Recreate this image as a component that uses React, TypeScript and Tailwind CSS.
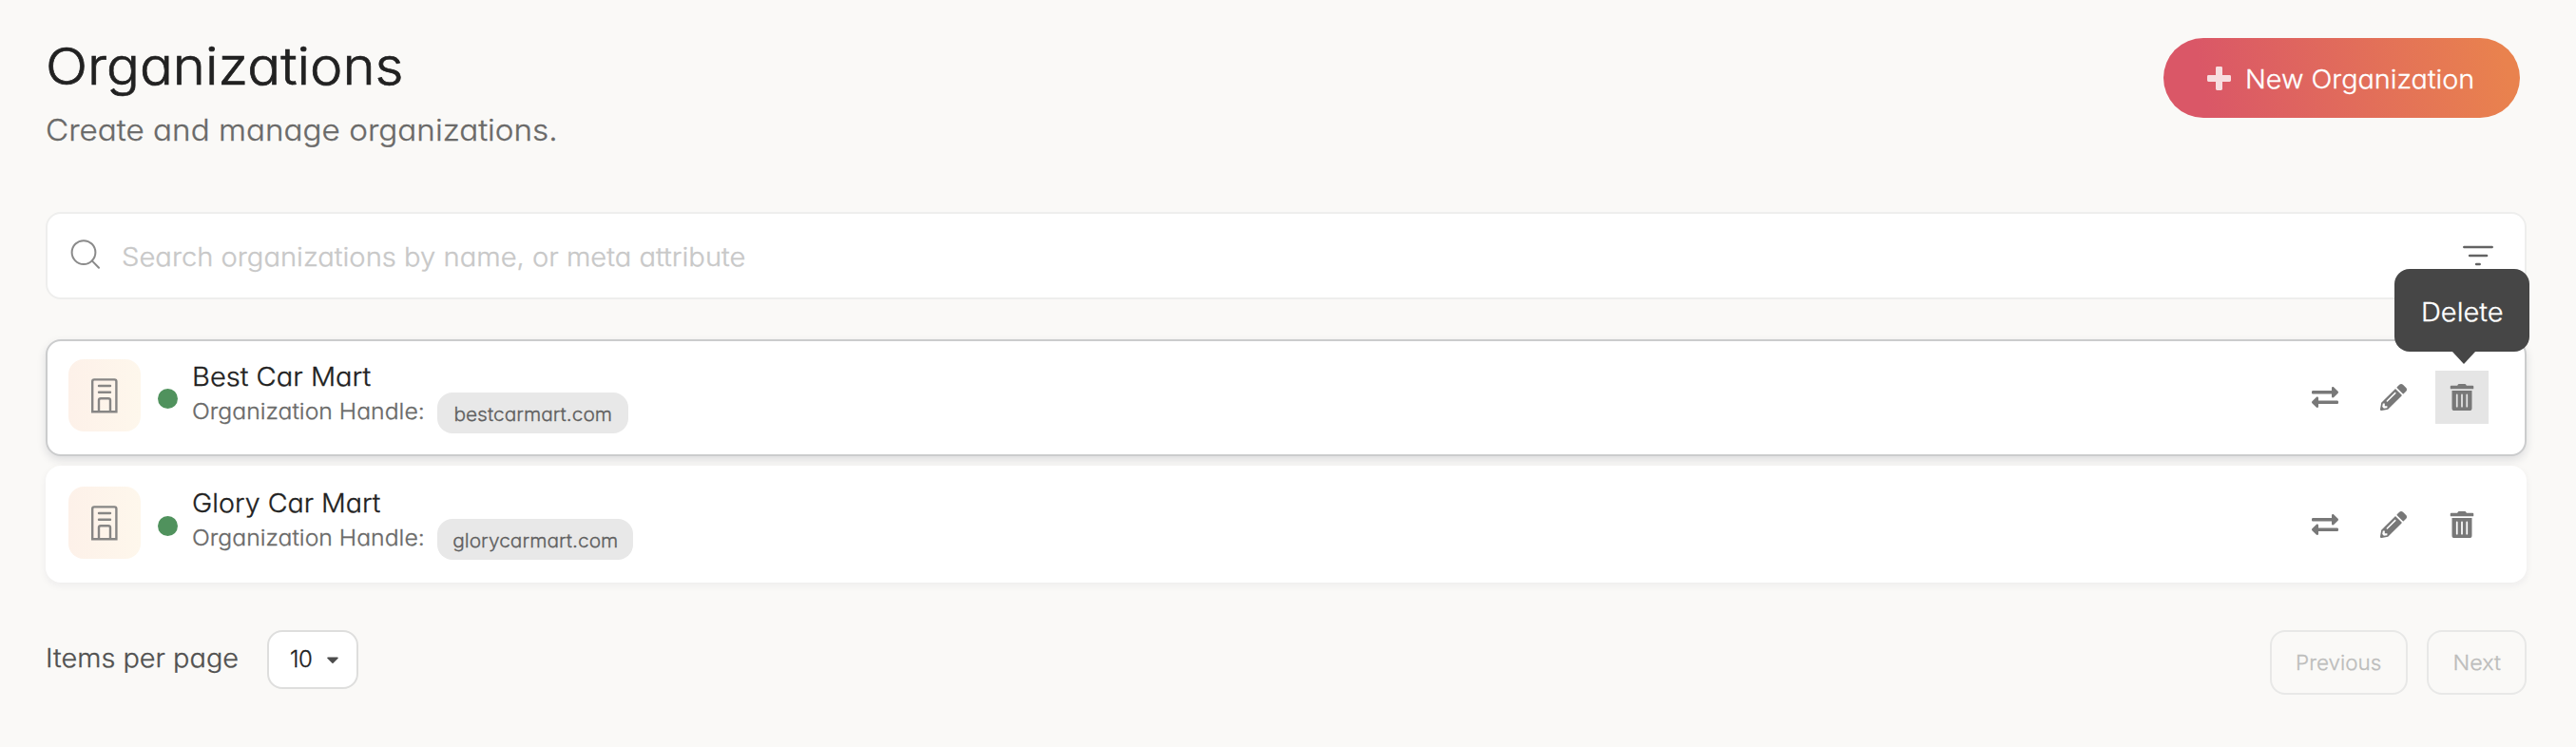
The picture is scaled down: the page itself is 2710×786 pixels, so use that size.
import { FaCaretDown, FaExchangeAlt, FaPencilAlt, FaTrashAlt } from 'react-icons/fa';

type Organization = { name: string; handle: string; nameClass: string; chipClass: string };

const organizations: Organization[] = [
  { name: 'Best Car Mart', handle: 'bestcarmart.com', nameClass: 'scale-x-[1.077]', chipClass: 'w-[201px]' },
  { name: 'Glory Car Mart', handle: 'glorycarmart.com', nameClass: 'scale-x-[1.06]', chipClass: 'w-[206px]' },
];

function PlusIcon() {
  return (
    <svg width="25" height="25" viewBox="0 0 25 25" fill="#fff">
      <path d="M10.4 0H14.6Q16 0 16 1.4V9H23.6Q25 9 25 10.4V14.6Q25 16 23.6 16H16V23.6Q16 25 14.6 25H10.4Q9 25 9 23.6V16H1.4Q0 16 0 14.6V10.4Q0 9 1.4 9H9V1.4Q9 0 10.4 0Z" />
    </svg>
  );
}

function BuildingIcon() {
  return (
    <svg width="28" height="37" viewBox="0 0 28 37" fill="none" stroke="#878685" strokeWidth="2.4">
      <path d="M1.2 35.3V3.2Q1.2 1.4 3.2 1.4H24.4Q26.4 1.4 26.4 3.2V35.3Z" />
      <path d="M8 8H20M8 14.8H20" strokeLinecap="round" />
      <path d="M8 35.5V23Q8 21.2 10 21.2H18Q20 21.2 20 23V35.5" />
    </svg>
  );
}

function SearchIcon() {
  return (
    <svg width="32" height="32" viewBox="0 0 32 32" fill="none" stroke="#8a8a8a" strokeWidth="2">
      <circle cx="14" cy="13.6" r="12.4" />
      <path d="M22.8 22.4L30 29.8" strokeLinecap="round" />
    </svg>
  );
}

function FilterIcon() {
  return (
    <svg width="32" height="22" viewBox="0 0 32 22" stroke="#636363" strokeWidth="2.7" strokeLinecap="round">
      <path d="M1.4 2H30.6M7.2 11H25M14.2 20H17.6" />
    </svg>
  );
}

function Tooltip({ label }: { label: string }) {
  return (
    <div className="absolute -top-[107px] left-1/2 z-10 flex h-[87px] w-[142px] -translate-x-[71px] items-center justify-center rounded-[16px] bg-[#464646] pt-[6px] text-[27px] text-white">
      <span className="scale-x-[1.075]">{label}</span>
      <svg className="absolute top-[86px] left-[60px]" width="26" height="14" viewBox="0 0 26 14">
        <path d="M0 0H26L13 14Z" fill="#464646" />
      </svg>
    </div>
  );
}

function OrganizationRow({ org, active }: { org: Organization; active: boolean }) {
  return (
    <div
      className={`flex h-[123px] items-start rounded-[16px] border-2 bg-white pr-[38px] pl-[22px] ${
        active
          ? 'border-[#cbcccd] shadow-[0_4px_10px_0_rgba(34,36,60,0.13)]'
          : 'border-white shadow-[0_3px_8px_0_rgba(34,36,60,0.06)]'
      }`}
    >
      <div className={`flex shrink-0 items-start ${active ? 'pt-[19px]' : 'pt-[20px]'}`}>
        <div className="flex size-[76px] items-center justify-center rounded-[16px] bg-linear-to-r from-[#fdf1e9] to-[#fef7ec]">
          <BuildingIcon />
        </div>
        <div className="mt-[31px] ml-[18px] size-[21px] rounded-full bg-[#50925d]" />
      </div>
      <div className="ml-[15px] flex flex-col pt-[22px]">
        <div className={`h-[32px] w-max origin-left text-[27px] leading-[32px] text-[#212121] ${org.nameClass}`}>{org.name}</div>
        <div className="flex items-start">
          <div className="mt-[5px] w-[258px]">
            <div className="w-max origin-left scale-x-[1.077] text-[23px] leading-[30px] text-[#6a6a69]">Organization Handle:</div>
          </div>
          <div
            className={`flex h-[43px] items-center justify-center rounded-[16px] bg-[#e8e8e8] pt-[2px] text-[20px] text-[#5f5f5f] ${org.chipClass}`}
          >
            <span className="scale-x-[1.045]">{org.handle}</span>
          </div>
        </div>
      </div>
      <div className={`ml-auto flex gap-4 text-[28px] text-[#787878] ${active ? 'pt-[31px]' : 'pt-[32px]'}`}>
        <button className="flex size-14 items-center justify-center"><FaExchangeAlt /></button>
        <button className="flex size-14 items-center justify-center"><FaPencilAlt /></button>
        <button className={`relative flex size-14 items-center justify-center ${active ? 'bg-[#e5e5e5]' : ''}`}>
          <FaTrashAlt />
          {active && <Tooltip label="Delete" />}
        </button>
      </div>
    </div>
  );
}

export default function App() {
  return (
    <div className="h-[786px] w-full overflow-hidden bg-[#faf9f7] pr-[52px] pl-[48px] font-['Inter',sans-serif] font-light [-webkit-text-stroke-width:0.3px] [font-feature-settings:'cv11']">
      <header className="flex h-[223px] items-start justify-between">
        <div className="pt-[38px]">
          <h1 className="w-max origin-left scale-x-[1.075] text-[54px] leading-[64px] font-light text-[#212121] [-webkit-text-stroke-width:0.7px]">Organizations</h1>
          <p className="mt-[15px] w-max origin-left scale-x-[1.072] text-[31px] leading-[40px] text-[#6a6a69]">Create and manage organizations.</p>
        </div>
        <button className="mt-[40px] mr-[7px] flex h-[84px] w-[375px] items-center rounded-full bg-linear-[80deg] from-[#da5767] from-12% to-[#e9824e] to-95% pl-[46px] text-white">
          <span className="opacity-80"><PlusIcon /></span>
          <span className="mt-[4px] ml-[15px] origin-left scale-x-[1.065] text-[27px]">New Organization</span>
        </button>
      </header>

      <div className="flex h-[92px] items-center rounded-[16px] border-2 border-[#eeeeed] bg-white pr-[33px] pl-[24px]">
        <div className="-mt-[2px]"><SearchIcon /></div>
        <div className="mt-[4px] ml-[22px] grow">
          <div className="w-max origin-left scale-x-[1.08] text-[27px] text-[#c8c8c8]">
            Search organizations by name, or meta attribute
          </div>
        </div>
        <FilterIcon />
      </div>

      <main className="mt-[42px] flex flex-col gap-[10px]">
        {organizations.map((org, i) => (
          <OrganizationRow key={org.handle} org={org} active={i === 0} />
        ))}
      </main>

      <footer className="mt-[50px] flex items-start justify-between">
        <div className="flex h-[62px] items-center">
          <div className="-mt-[1px] w-[233px]">
            <div className="w-max origin-left scale-x-[1.07] text-[27px] text-[#515150]">Items per page</div>
          </div>
          <button className="flex h-[62px] w-[96px] items-center rounded-[16px] border-2 border-[#dededd] bg-white pl-[22px] text-[24px] text-[#212121]">
            <span className="tracking-[-0.5px]">10</span>
            <FaCaretDown className="ml-[12px] size-[20px] text-[#4c4c4c]" />
          </button>
        </div>
        <div className="flex gap-[20px] text-[22px] text-[#bdbdbc]">
          <button className="flex h-[68px] w-[145px] items-center justify-center rounded-[16px] border-2 border-[#e8e8e7]"><span className="scale-x-[1.02]">Previous</span></button>
          <button className="flex h-[68px] w-[105px] items-center justify-center rounded-[16px] border-2 border-[#e8e8e7]"><span className="scale-x-[1.06]">Next</span></button>
        </div>
      </footer>
    </div>
  );
}
